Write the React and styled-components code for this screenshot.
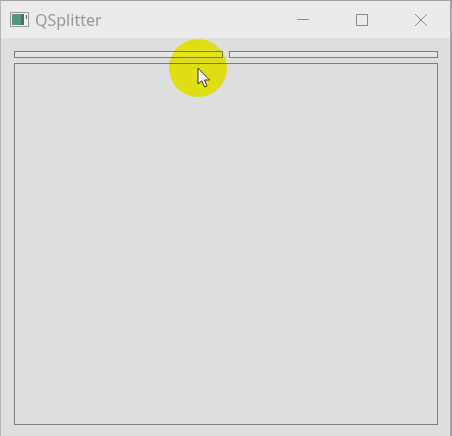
import styled, { createGlobalStyle } from "styled-components";

const Global = createGlobalStyle`
  html, body { margin: 0; padding: 0; background: #dedede; }
  #root { width: 452px; height: 436px; }
`;

export default function App() {
  return (
    <>
      <Global />
      <Window>
        <TitleBar>
          <AppIcon width="20" height="16" viewBox="0 0 20 16">
            <defs>
              <linearGradient id="pane" x1="0" y1="0" x2="0" y2="1">
                <stop offset="0" stopColor="#5d8f88" />
                <stop offset="1" stopColor="#4f9a7c" />
              </linearGradient>
            </defs>
            <rect x="0.5" y="0.5" width="18" height="14" fill="#f0f0f0" stroke="#8f9a9c" />
            <rect x="2" y="2" width="9" height="11" fill="url(#pane)" />
            <rect x="11" y="2" width="3" height="11" fill="#56676a" />
            <rect x="16" y="3" width="1" height="4" fill="#56676a" />
          </AppIcon>
          <Title>QSplitter</Title>
          <Controls>
            <ControlButton>
              <svg width="14" height="14" viewBox="0 0 14 14">
                <path d="M1 6.5H13" stroke="#8a8a8a" fill="none" />
              </svg>
            </ControlButton>
            <ControlButton>
              <svg width="14" height="14" viewBox="0 0 14 14">
                <rect x="1.5" y="1.5" width="11" height="11" stroke="#8a8a8a" fill="none" />
              </svg>
            </ControlButton>
            <ControlButton>
              <svg width="14" height="14" viewBox="0 0 14 14">
                <path d="M1 1L13 13M13 1L1 13" stroke="#8a8a8a" fill="none" />
              </svg>
            </ControlButton>
          </Controls>
        </TitleBar>
        <Body>
          <TopRow>
            <Frame />
            <Frame />
          </TopRow>
          <BottomFrame />
        </Body>
        <Highlight />
        <Cursor width="16" height="24" viewBox="0 0 16 24">
          <path
            d="M1 1V17L4.8 13.8L7.6 20L10 19L7.4 13H12.5Z"
            fill="#fff"
            stroke="#333"
            strokeWidth="1"
            strokeLinejoin="round"
          />
        </Cursor>
      </Window>
    </>
  );
}

const Window = styled.div`
  position: relative;
  box-sizing: border-box;
  width: 452px;
  height: 436px;
  display: flex;
  flex-direction: column;
  overflow: hidden;
  background: #dedede;
  border-top: 1px solid #a3a3a3;
  border-left: 1px solid #b5b5b5;
  border-right: 2px solid #a8a8a8;
`;

const TitleBar = styled.div`
  height: 37px;
  flex: none;
  display: flex;
  align-items: center;
  background: #ebebeb;
  padding-left: 9px;
`;

const AppIcon = styled.svg`
  flex: none;
  margin-right: 5px;
`;

const Title = styled.span`
  flex: 1;
  font-family: "Noto Sans", "Open Sans", sans-serif;
  font-size: 16px;
  color: #999999;
`;

const Controls = styled.div`
  display: flex;
`;

const ControlButton = styled.div`
  width: 59px;
  height: 37px;
  display: flex;
  align-items: center;
  justify-content: center;
`;

const Body = styled.div`
  flex: 1;
  display: flex;
  flex-direction: column;
  gap: 5px;
  padding: 13px 12px 11px 13px;
`;

const TopRow = styled.div`
  display: grid;
  grid-template-columns: 1fr 1fr;
  gap: 6px;
  height: 7px;
`;

const Frame = styled.div`
  box-sizing: border-box;
  border: 1px solid #7d7d7d;
  background: #e6e6e6;
`;

const BottomFrame = styled.div`
  flex: 1;
  border: 1px solid #7d7d7d;
  background: #dedede;
`;

/* multiply lets the frame lines show through the cursor highlight */
const Highlight = styled.div`
  position: absolute;
  left: 168px;
  top: 38px;
  width: 58px;
  height: 58px;
  border-radius: 50%;
  background: #ffff14;
  mix-blend-mode: multiply;
`;

const Cursor = styled.svg`
  position: absolute;
  left: 196px;
  top: 66px;
`;
